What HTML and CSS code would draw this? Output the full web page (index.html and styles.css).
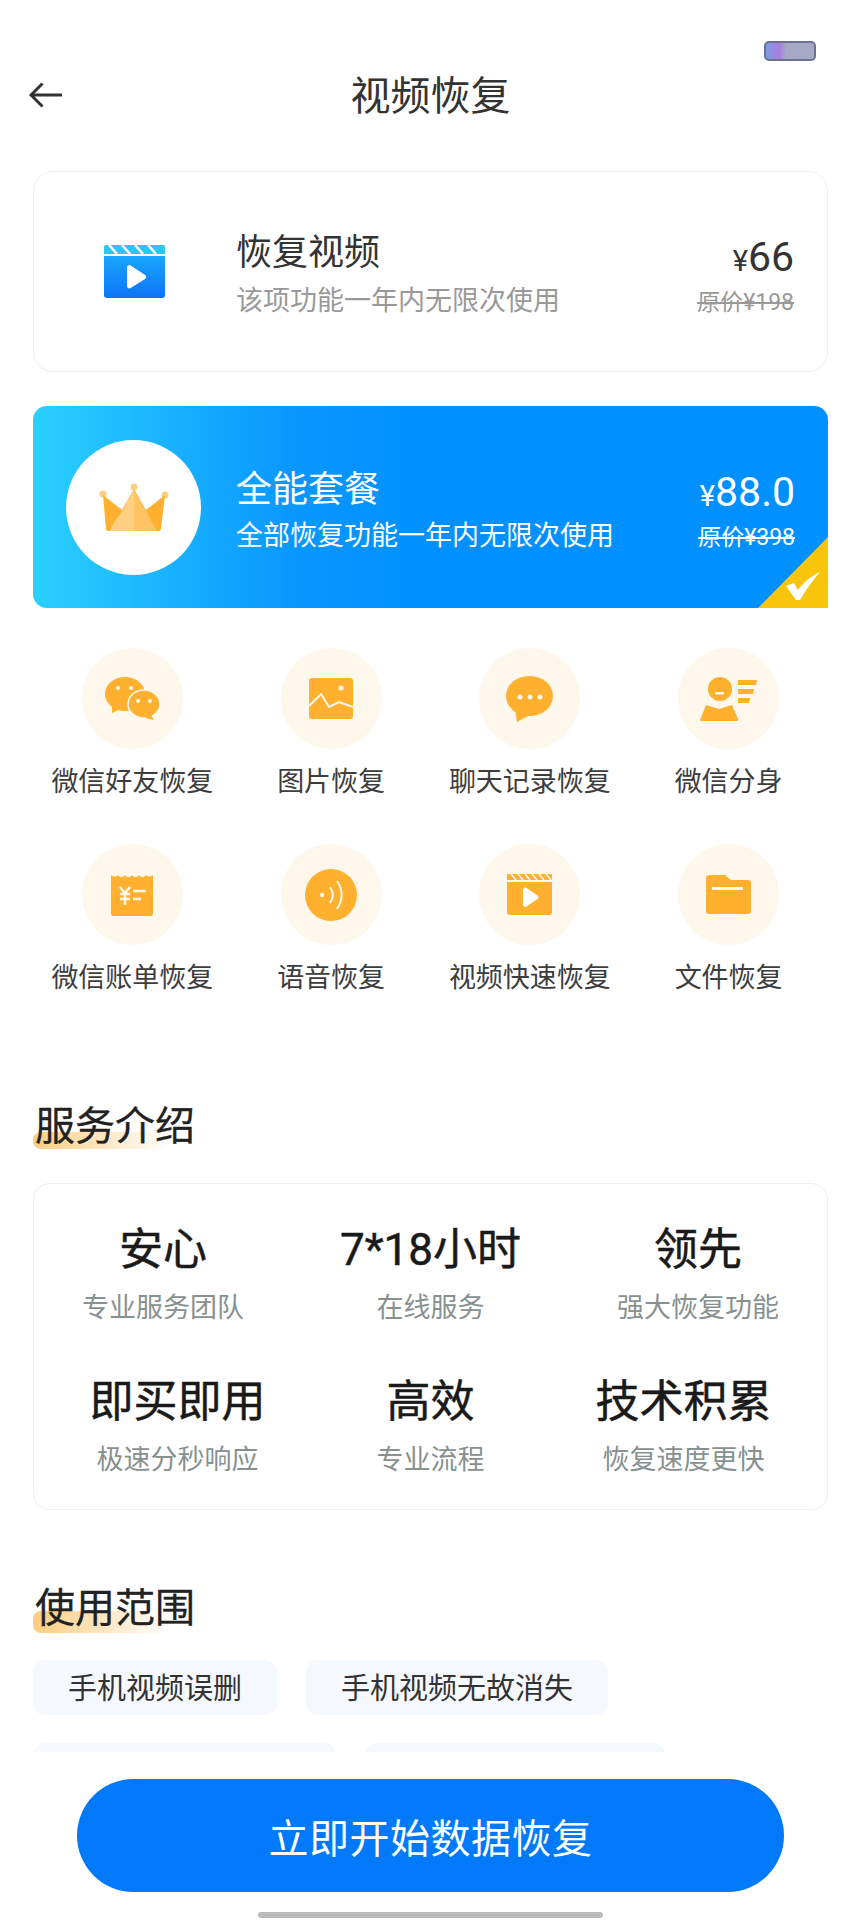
FILE: index.html
```html
<!DOCTYPE html>
<html lang="zh-CN">
<head>
  <meta charset="UTF-8" />
  <title>视频恢复</title>
  <link rel="stylesheet" href="styles.css">
</head>
<body>

<div class="page">
  <div class="content">
    <div class="status"><span class="pill"></span></div>

    <header class="nav">
      <svg class="back" width="33" height="26" viewBox="0 0 33 26"><path d="M33 13H2M13.5 1.5L2 13l11.5 11.5" fill="none" stroke="#333" stroke-width="3"/></svg>
      <h1>视频恢复</h1>
      <span></span>
    </header>

    <main>
      <section class="plan">
        <svg class="plan-icon" width="61" height="53" viewBox="0 0 61 53">
          <defs>
            <linearGradient id="filmBody" x1="0" y1="0" x2="0" y2="1"><stop offset="0" stop-color="#1aa6ff"/><stop offset="1" stop-color="#0b74f4"/></linearGradient>
          </defs>
          <path d="M2 0h57a2 2 0 0 1 2 2v7H0V2a2 2 0 0 1 2-2z" fill="#2cc5ee"/>
          <path d="M5 0l8 9M18 0l8 9M31 0l8 9M44 0l8 9" stroke="#fff" stroke-width="2.5"/>
          <path d="M0 11h61v39a3 3 0 0 1-3 3H3a3 3 0 0 1-3-3z" fill="url(#filmBody)"/>
          <path d="M23 22.5c0-2 2-3 3.600-2l14.500 9.500c1.500 1 1.500 3 0 4L26.600 43c-1.600 1-3.600 0-3.600-2z" fill="#fff"/>
        </svg>
        <div class="plan-text">
          <h2>恢复视频</h2>
          <p>该项功能一年内无限次使用</p>
        </div>
        <div class="plan-price">
          <div class="now"><small>¥</small>66</div>
          <div class="was">原价¥198</div>
        </div>
      </section>

      <section class="plan plan-all">
        <div class="crown-circle">
          <svg width="71" height="48" viewBox="0 0 71 48">
            <circle cx="5" cy="11" r="3.500" fill="#fdcf80"/>
            <circle cx="36" cy="4" r="3.500" fill="#fdcf80"/>
            <circle cx="67" cy="12" r="3.500" fill="#fdcf80"/>
            <path d="M5 12l19 15L36 6l12 21 19-15-4 34a2 2 0 0 1-2 2H10a2 2 0 0 1-2-2z" fill="#ffb02e"/>
            <path d="M12 48c3-9 11-17 14-23L36 6v42z" fill="#fed07f"/>
            <path d="M36 6l11 20c4 7 8 16 12 22H36z" fill="#fec363"/>
          </svg>
        </div>
        <div class="plan-text">
          <h2>全能套餐</h2>
          <p>全部恢复功能一年内无限次使用</p>
        </div>
        <div class="plan-price">
          <div class="now"><small>¥</small>88.0</div>
          <div class="was">原价¥398</div>
        </div>
        <svg class="picked" width="70" height="71" viewBox="0 0 70 71">
          <path d="M70 0v71H0z" fill="#f8c50a"/>
          <path d="M28 49l8-3 4 7c6-8 13-14 22-18-8 9-14 18-20 28h-4z" fill="#fff"/>
        </svg>
      </section>

      <section class="features">
        <div class="feature">
          <div class="feature-circle">
            <svg width="55" height="43" viewBox="0 0 55 43">
              <ellipse cx="20" cy="17" rx="20" ry="17" fill="#ffb02e"/>
              <path d="M7 28l0 8 9-4z" fill="#ffb02e"/>
              <ellipse cx="39" cy="27" rx="16" ry="14" fill="#ffb02e" stroke="#fef8ec" stroke-width="1.500"/>
              <path d="M46 38l3 5-9-2z" fill="#ffb02e"/>
              <circle cx="13" cy="11" r="2" fill="#fef8ec"/><circle cx="26" cy="11" r="2" fill="#fef8ec"/>
              <circle cx="33" cy="24" r="2" fill="#fef8ec"/><circle cx="45" cy="24" r="2" fill="#fef8ec"/>
            </svg>
          </div>
          <span>微信好友恢复</span>
        </div>
        <div class="feature">
          <div class="feature-circle">
            <svg width="44" height="41" viewBox="0 0 44 41">
              <rect width="44" height="41" rx="3" fill="#ffb02e"/>
              <path d="M0 28l12-12 8 13 10-5 14 5" fill="none" stroke="#fef8ec" stroke-width="2"/>
              <circle cx="32" cy="10" r="2.500" fill="#fef8ec"/>
            </svg>
          </div>
          <span>图片恢复</span>
        </div>
        <div class="feature">
          <div class="feature-circle">
            <svg width="47" height="46" viewBox="0 0 47 46">
              <ellipse cx="23.500" cy="20" rx="23.500" ry="20" fill="#ffb02e"/>
              <path d="M9 32l2 14 13-7z" fill="#ffb02e"/>
              <circle cx="14" cy="21" r="2.500" fill="#fef8ec"/><circle cx="24" cy="21" r="2.500" fill="#fef8ec"/><circle cx="34" cy="21" r="2.500" fill="#fef8ec"/>
            </svg>
          </div>
          <span>聊天记录恢复</span>
        </div>
        <div class="feature">
          <div class="feature-circle">
            <svg width="57" height="44" viewBox="0 0 57 44">
              <circle cx="20" cy="12" r="12" fill="#ffb02e"/>
              <rect x="15" y="15" width="9" height="2.500" rx="1.200" fill="#fef8ec"/>
              <path d="M1 44c-1 0-1-1-.5-2L6 28l13 4 13-4 6 14c.4 1 0 2-1 2z" fill="#ffb02e"/>
              <path d="M38 3h19l-1 5H38zM38 12h16l-1 5H38zM38 21h12l-1 5H38z" fill="#ffb02e"/>
            </svg>
          </div>
          <span>微信分身</span>
        </div>
        <div class="feature">
          <div class="feature-circle">
            <svg width="42" height="42" viewBox="0 0 42 42">
              <path d="M0 1c3 2 5 2 7 0 2 3 5 3 7 0 2 3 5 3 7 0 2 3 5 3 7 0 2 3 5 3 7 0 2 2 4 2 7 0v39a2 2 0 0 1-2 2H2a2 2 0 0 1-2-2z" fill="#ffb02e"/>
              <path d="M9 13l5 6 5-6M14 19v12M9 20h10M9 25h10" fill="none" stroke="#fef8ec" stroke-width="2.500"/>
              <path d="M22 17h13M22 25h8" stroke="#fef8ec" stroke-width="2.500"/>
            </svg>
          </div>
          <span>微信账单恢复</span>
        </div>
        <div class="feature">
          <div class="feature-circle">
            <svg width="52" height="52" viewBox="0 0 52 52">
              <circle cx="26" cy="26" r="26" fill="#ffb02e"/>
              <circle cx="17" cy="26" r="2.200" fill="#fef8ec"/>
              <path d="M25 18c3.500 5 3.500 11 0 16M32 12c6 9 6 19 0 28" fill="none" stroke="#fef8ec" stroke-width="2"/>
            </svg>
          </div>
          <span>语音恢复</span>
        </div>
        <div class="feature">
          <div class="feature-circle">
            <svg width="45" height="41" viewBox="0 0 45 41">
              <path d="M1 0h43a1 1 0 0 1 1 1v5H0V1a1 1 0 0 1 1-1z" fill="#ffb02e"/>
              <path d="M4 0l5 6M11 0l5 6M18 0l5 6M25 0l5 6M32 0l5 6M39 0l5 6" stroke="#fef8ec" stroke-width="1.500"/>
              <path d="M0 8h45v30a3 3 0 0 1-3 3H3a3 3 0 0 1-3-3z" fill="#ffb02e"/>
              <path d="M16 16c0-2 2-3 3.500-2l11 7.500c1.300 1 1.300 2.500 0 3.500l-11 7.500c-1.500 1-3.500 0-3.500-2z" fill="#fff"/>
            </svg>
          </div>
          <span>视频快速恢复</span>
        </div>
        <div class="feature">
          <div class="feature-circle">
            <svg width="45" height="39" viewBox="0 0 45 39">
              <path d="M3 0h16l6 5h17a3 3 0 0 1 3 3v28a3 3 0 0 1-3 3H3a3 3 0 0 1-3-3V3a3 3 0 0 1 3-3z" fill="#ffb02e"/>
              <rect x="6" y="12" width="31" height="3" fill="#fef8ec"/>
            </svg>
          </div>
          <span>文件恢复</span>
        </div>
      </section>

      <h3 class="section-title title-service"><span>服务介绍</span></h3>
      <section class="service">
        <div class="service-row">
          <div class="service-item"><b>安心</b><span>专业服务团队</span></div>
          <div class="service-item"><b>7*18小时</b><span>在线服务</span></div>
          <div class="service-item"><b>领先</b><span>强大恢复功能</span></div>
        </div>
        <div class="service-row">
          <div class="service-item"><b>即买即用</b><span>极速分秒响应</span></div>
          <div class="service-item"><b>高效</b><span>专业流程</span></div>
          <div class="service-item"><b>技术积累</b><span>恢复速度更快</span></div>
        </div>
      </section>

      <h3 class="section-title title-scope"><span>使用范围</span></h3>
      <section class="tags">
        <span class="tag">手机视频误删</span>
        <span class="tag">手机视频无故消失</span>
        <span class="tag tag-blank tag-blank-a"></span>
        <span class="tag tag-blank tag-blank-b"></span>
      </section>
    </main>
  </div>

  <footer class="bottom">
    <button class="start">立即开始数据恢复</button>
    <div class="home-bar"></div>
  </footer>
</div>

</body>
</html>
```
FILE: styles.css
```css
* {
  box-sizing: border-box;
}
body {
  margin: 0;
  background: #fff;
  color: #333;
  font-family: Roboto, 'Noto Sans CJK SC', sans-serif;
}
.page {
  height: 1920px;
  display: flex;
  flex-direction: column;
}
.content {
  flex: 1;
  overflow: hidden;
}
.status {
  height: 61px;
  padding: 41px 45px 0 0;
  display: flex;
  justify-content: flex-end;
}
.pill {
  width: 52px;
  height: 20px;
  border: 2px solid #6d7190;
  border-radius: 5px;
  background: linear-gradient(90deg, #7f9ce2 0%, #a97fe2 28%, #a6a8c6 42%);
}
.nav {
  height: 64px;
  padding: 0 29px;
  display: grid;
  grid-template-columns: 1fr auto 1fr;
  align-items: center;
}
.nav h1 {
  margin: 0;
  padding-top: 4px;
  font-size: 40px;
  font-weight: 400;
  line-height: 64px;
}
main {
  padding: 46px 33px 0;
}

/* price cards */
.plan {
  height: 201px;
  padding: 0 33px 0 70px;
  border: 1px solid #f0f0f0;
  border-radius: 20px;
  display: flex;
  align-items: center;
  position: relative;
  overflow: hidden;
}
.plan-icon {
  flex: none;
  margin-right: 71px;
}
.plan-text {
  flex: 1;
  padding-top: 6px;
}
.plan-text h2 {
  margin: 0;
  font-size: 36px;
  font-weight: 400;
  line-height: 44px;
}
.plan-text p {
  margin: 8px 0 0;
  font-size: 27px;
  line-height: 36px;
  color: #999;
}
.plan-price {
  padding-top: 10px;
  text-align: right;
}
.now {
  font-size: 41px;
  line-height: 48px;
}
.now small {
  font-size: 29px;
}
.was {
  font-size: 23px;
  line-height: 36px;
  color: #999;
  text-decoration: line-through;
}
.plan-all {
  height: 202px;
  margin-top: 34px;
  padding: 0 33px;
  border: none;
  border-radius: 14px 14px 0 14px;
  background: linear-gradient(90deg, #2ad0ff 0%, #0a98ff 32%, #0090ff 50%);
  color: #fff;
}
.plan-all .plan-text {
  padding-top: 8px;
}
.plan-all .plan-text p {
  margin-top: 6px;
  color: #fff;
}
.plan-all .was {
  color: #fff;
}
.crown-circle {
  flex: none;
  width: 135px;
  height: 135px;
  margin-right: 35px;
  border-radius: 50%;
  background: #fff;
  display: flex;
  align-items: center;
  justify-content: center;
}
.picked {
  position: absolute;
  right: 0;
  bottom: 0;
}

/* feature grid */
.features {
  margin-top: 40px;
  display: grid;
  grid-template-columns: repeat(4, 1fr);
  row-gap: 44px;
}
.feature {
  display: flex;
  flex-direction: column;
  align-items: center;
}
.feature-circle {
  width: 101px;
  height: 101px;
  border-radius: 50%;
  background: #fef8ec;
  display: flex;
  align-items: center;
  justify-content: center;
}
.feature span {
  margin-top: 15px;
  font-size: 27px;
  line-height: 36px;
  color: #3d3d3d;
}

/* headings with the orange marker */
.section-title {
  height: 50px;
  margin: 104px 0 0;
  font-size: 40px;
  font-weight: 400;
  line-height: 54px;
  color: #222;
  -webkit-text-stroke: 0.3px #222;
}
.section-title span {
  display: inline-block;
  padding-left: 2px;
  position: relative;
  z-index: 0;
}
.section-title span::after {
  content: '';
  position: absolute;
  z-index: -1;
  left: 0;
  bottom: 5px;
  width: 136px;
  height: 17px;
  border-radius: 8px 0 0 8px;
  background: linear-gradient(90deg, #fbcd80, rgba(251, 205, 128, 0));
}
.title-scope {
  margin-top: 70px;
  line-height: 58px;
}
.title-scope span::after {
  height: 22px;
}

/* service card */
.service {
  margin-top: 33px;
  height: 327px;
  padding: 40px 0 0;
  border: 1px solid #f0f0f0;
  border-radius: 16px;
}
.service-row {
  display: flex;
  justify-content: space-around;
  margin-bottom: 50px;
}
.service-item {
  display: flex;
  flex-direction: column;
  align-items: center;
}
.service-item b {
  font-size: 44px;
  font-weight: 400;
  line-height: 52px;
  color: #1a1a1a;
  -webkit-text-stroke: 0.5px #1a1a1a;
}
.service-item span {
  margin-top: 14px;
  font-size: 27px;
  line-height: 36px;
  color: #87918f;
}

/* tags */
.tags {
  margin-top: 30px;
  display: flex;
  flex-wrap: wrap;
  gap: 28px 29px;
  width: 700px;
}
.tag {
  height: 55px;
  padding: 0 35px;
  border-radius: 12px;
  background: #f5f8fd;
  font-size: 29px;
  line-height: 59px;
}
.tag-blank-a {
  width: 303px;
}
.tag-blank-b {
  width: 300px;
}

/* bottom bar */
.bottom {
  height: 168px;
  padding-top: 27px;
  background: #fff;
}
.start {
  display: block;
  width: 707px;
  height: 113px;
  margin-left: 77px;
  border: none;
  border-radius: 57px;
  background: #0179fb;
  color: #fff;
  font-family: inherit;
  font-size: 40px;
  letter-spacing: 0.5px;
}
.home-bar {
  width: 345px;
  height: 6px;
  margin: 20px 0 0 258px;
  border-radius: 3px;
  background: #bbb;
}
```
